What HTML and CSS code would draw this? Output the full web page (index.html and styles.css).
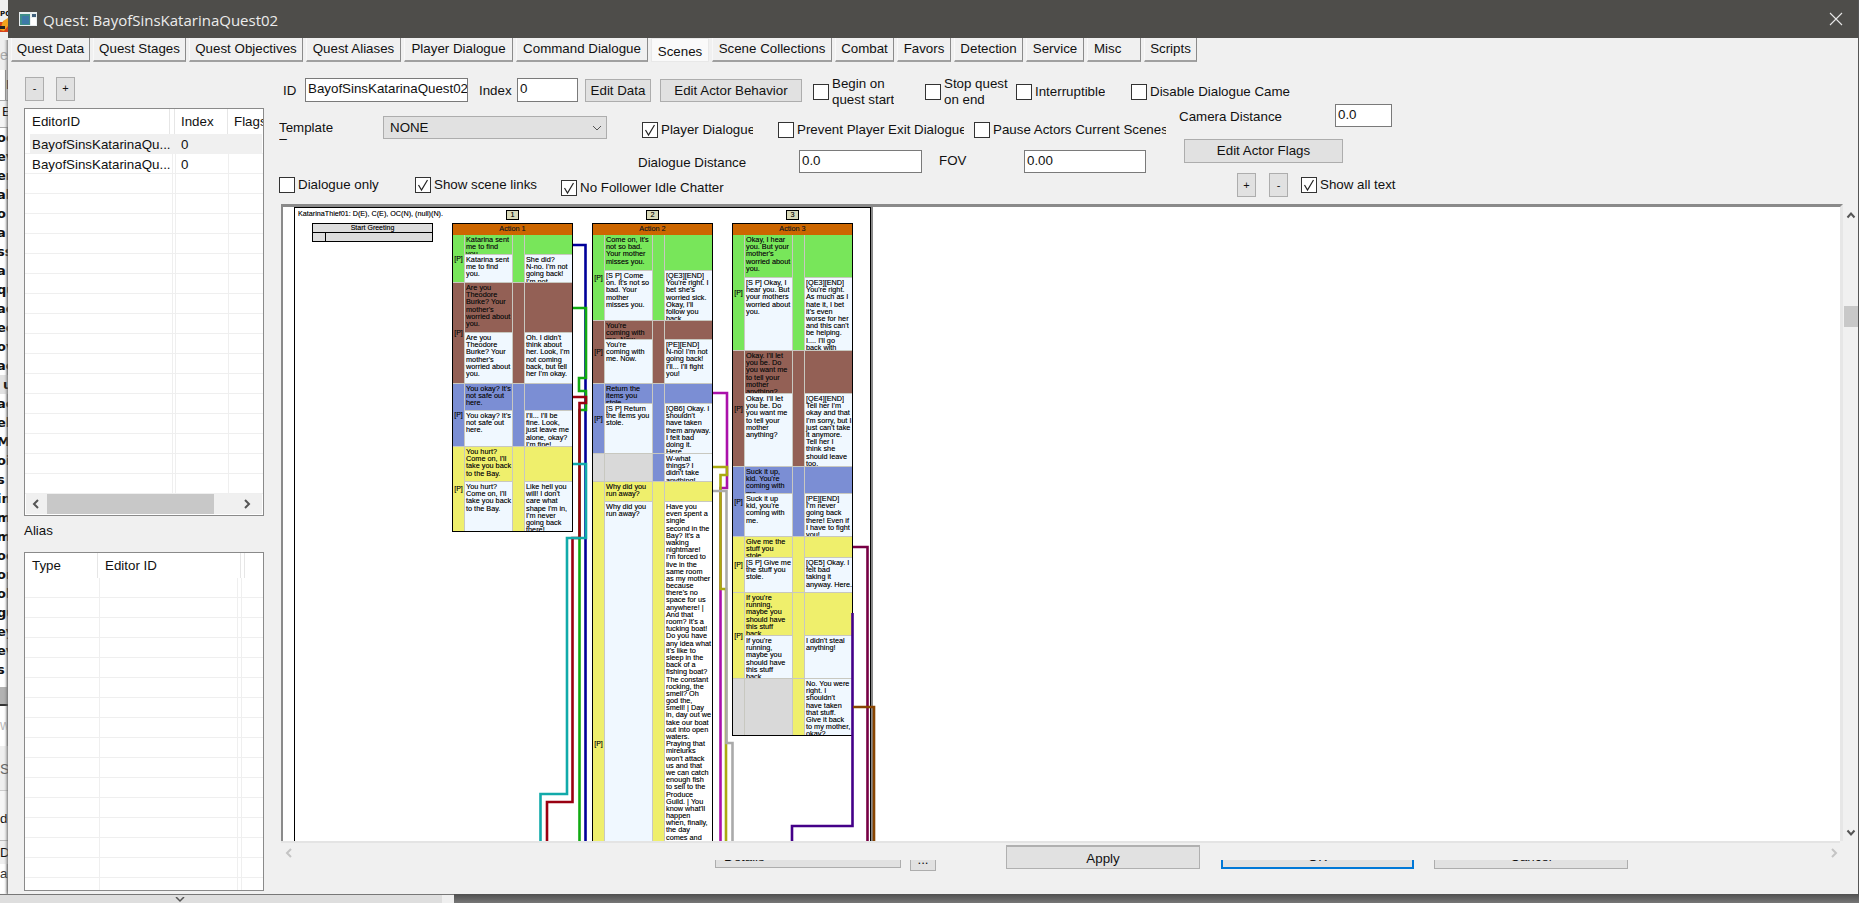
FILE: index.html
```html
<!DOCTYPE html>
<html lang="en">
<head>
<meta charset="utf-8">
<title>Quest: BayofSinsKatarinaQuest02</title>
<link rel="stylesheet" href="styles.css">
</head>
<body>
<div class="app">
  <div class="upper">
    <aside class="behind">
      <div class="b-top"><span class="b-pc">PC</span><svg class="b-icon" width="8" height="14" viewBox="0 0 8 14"><path d="M0 4h8v10H0z" fill="#d8431c"/><path d="M3 3l5-3v8l-4 5-4-1z" fill="#f2a31d"/><path d="M0 8h5v3H0z" fill="#222"/></svg></div>
      <div class="b-e">e</div>
      <div class="b-btn">D</div>
      <div class="b-box">E</div>
      <div class="b-list">
        <div>oc</div><div>ev</div><div>er</div><div>al</div><div>o</div><div>a</div><div>ss</div><div>a</div><div>qu</div><div>ac</div><div>ee</div><div>ov</div><div>ac</div><div class="b-sel">ue</div><div>ac</div><div>el</div><div>M</div><div>oi</div><div>s</div><div>in</div><div>m</div><div>m</div><div>oc</div><div>or</div><div>ol</div><div>gu</div><div>ey</div><div>ev</div><div>s</div>
      </div>
      <div class="b-bar"></div>
      <div class="b-w">w</div>
      <div class="b-sp">Sp</div>
      <div class="b-dc">dc</div>
      <div class="b-d">D</div>
      <div class="b-ar">ar</div>
    </aside>
    <main class="dialog">
      <header class="titlebar">
        <svg class="win-icon" width="18" height="14" viewBox="0 0 18 14"><rect width="18" height="14" fill="#e8eef0"/><rect x="1" y="2" width="10" height="11" fill="#3f8f8a"/><rect x="3" y="4" width="7" height="8" fill="#3e79a8"/><rect x="13" y="2" width="4" height="3" fill="#40607c"/><rect x="12" y="6" width="5" height="7" fill="#fff"/></svg>
        <span class="title">Quest: BayofSinsKatarinaQuest02</span>
        <svg class="close" width="14" height="14" viewBox="0 0 14 14"><path d="M1 1l12 12M13 1L1 13" stroke="#e8e8e8" stroke-width="1.1" fill="none"/></svg>
      </header>
      <nav class="tabs">
        <div class="tab">Quest Data</div>
        <div class="tab">Quest Stages</div>
        <div class="tab">Quest Objectives</div>
        <div class="tab">Quest Aliases</div>
        <div class="tab">Player Dialogue</div>
        <div class="tab">Command Dialogue</div>
        <div class="tab tab-on">Scenes</div>
        <div class="tab">Scene Collections</div>
        <div class="tab">Combat</div>
        <div class="tab">Favors</div>
        <div class="tab">Detection</div>
        <div class="tab">Service</div>
        <div class="tab tab-left">Misc</div>
        <div class="tab">Scripts</div>
      </nav>
      <div class="content">
        <section class="leftpane">
          <div class="pm-row">
            <div class="btn pm">-</div>
            <div class="btn pm">+</div>
          </div>
          <div class="lv lv-scenes">
            <div class="lv-head">
              <div class="hc c-id">EditorID</div>
              <div class="hc c-ix">Index</div>
              <div class="hc c-fl">Flags</div>
            </div>
            <div class="lv-body">
              <div class="lv-row lv-sel"><div class="c-id">BayofSinsKatarinaQu...</div><div class="c-ix">0</div></div>
              <div class="lv-row"><div class="c-id">BayofSinsKatarinaQu...</div><div class="c-ix">0</div></div>
            </div>
            <div class="hscroll">
              <svg width="10" height="12" viewBox="0 0 10 12"><path d="M7 2L3 6l4 4" fill="none" stroke="#555" stroke-width="2"/></svg>
              <div class="hthumb"></div>
              <svg width="10" height="12" viewBox="0 0 10 12"><path d="M3 2l4 4-4 4" fill="none" stroke="#555" stroke-width="2"/></svg>
            </div>
          </div>
          <div class="alias-label">Alias</div>
          <div class="lv lv-alias">
            <div class="lv-head">
              <div class="hc c-type">Type</div>
              <div class="hc c-ed">Editor ID</div>
              <div class="hc c-rest"></div>
            </div>
            <div class="lv-body"></div>
          </div>
        </section>
        <section class="rightpane">
          <div class="row row-a">
            <div class="lbl l-id">ID</div>
            <div class="field f-id">BayofSinsKatarinaQuest02</div>
            <div class="lbl l-index">Index</div>
            <div class="field f-index">0</div>
            <div class="btn b-data">Edit Data</div>
            <div class="btn b-beh">Edit Actor Behavior</div>
            <div class="chk k-begin"><span class="box"></span><span class="chk-text">Begin on<br>quest start</span></div>
            <div class="chk k-stop"><span class="box"></span><span class="chk-text">Stop quest<br>on end</span></div>
            <div class="chk k-int"><span class="box"></span><span class="chk-text">Interruptible</span></div>
            <div class="chk k-dis"><span class="box"></span><span class="chk-text">Disable Dialogue Camera</span></div>
          </div>
          <div class="row row-b">
            <div class="lbl clipline l-tpl">Template<br>Type</div>
            <div class="select"><span>NONE</span><svg width="10" height="6" viewBox="0 0 10 6"><path d="M1 1l4 4 4-4" fill="none" stroke="#555" stroke-width="1"/></svg></div>
            <div class="chk k-pd"><span class="box on"><svg width="14" height="14" viewBox="0 0 14 14"><path d="M2.500 7l3 5 6-10" fill="none" stroke="#222" stroke-width="1.200"/></svg></span><span class="chk-text">Player Dialogue</span></div>
            <div class="chk k-prev"><span class="box"></span><span class="chk-text">Prevent Player Exit Dialogue</span></div>
            <div class="chk k-pause"><span class="box"></span><span class="chk-text">Pause Actors Current Scenes</span></div>
            <div class="lbl clipline l-cam">Camera Distance<br>Override</div>
            <div class="field f-cam">0.0</div>
          </div>
          <div class="row row-c">
            <div class="lbl clipline l-dd">Dialogue Distance<br>Override</div>
            <div class="field f-dd">0.0</div>
            <div class="lbl clipline l-fov">FOV<br>&nbsp;&nbsp;&nbsp;&nbsp;&nbsp;&nbsp;Override</div>
            <div class="field f-fov">0.00</div>
            <div class="btn b-flags">Edit Actor Flags</div>
          </div>
          <div class="row row-d">
            <div class="chk k-only"><span class="box"></span><span class="chk-text">Dialogue only</span></div>
            <div class="chk k-links"><span class="box on"><svg width="14" height="14" viewBox="0 0 14 14"><path d="M2.500 7l3 5 6-10" fill="none" stroke="#222" stroke-width="1.200"/></svg></span><span class="chk-text">Show scene links</span></div>
            <div class="chk k-foll"><span class="box on"><svg width="14" height="14" viewBox="0 0 14 14"><path d="M2.500 7l3 5 6-10" fill="none" stroke="#222" stroke-width="1.200"/></svg></span><span class="chk-text">No Follower Idle Chatter</span></div>
            <div class="btn zoom">+</div>
            <div class="btn zoom z2">-</div>
            <div class="chk k-all"><span class="box on"><svg width="14" height="14" viewBox="0 0 14 14"><path d="M2.500 7l3 5 6-10" fill="none" stroke="#222" stroke-width="1.200"/></svg></span><span class="chk-text">Show all text</span></div>
          </div>
          <div class="viewer">
            <div class="scene">
              <div class="board">
                <div class="scene-cap">KatarinaThief01: D(E), C(E), OC(N), (null)(N).</div>
                <div class="start">
                  <div class="start-h">Start Greeting</div>
                  <div class="start-b"><span></span></div>
                </div>
                <div class="num n1">1</div>
                <div class="num n2">2</div>
                <div class="num n3">3</div>

                <div class="action a1">
                  <div class="act-h">Action 1</div>
                  <div class="sec g r19-27"><div class="p">[P]</div><div class="t">Katarina sent<br>me to find<br>you.</div><div class="m"></div><div class="t"></div><div class="t low">Katarina sent<br>me to find<br>you.</div><div class="t low">She did?<br>N-no. I'm not<br>going back!<br>I'm not</div></div>
                  <div class="sec b r49-50"><div class="p">[P]</div><div class="t">Are you<br>Theodore<br>Burke? Your<br>mother's<br>worried about<br>you.</div><div class="m"></div><div class="t"></div><div class="t low">Are you<br>Theodore<br>Burke? Your<br>mother's<br>worried about<br>you.</div><div class="t low">Oh. I didn't<br>think about<br>her. Look, I'm<br>not coming<br>back, but tell<br>her I'm okay.</div></div>
                  <div class="sec u r26-35"><div class="p">[P]</div><div class="t">You okay? It's<br>not safe out<br>here.</div><div class="m"></div><div class="t"></div><div class="t low">You okay? It's<br>not safe out<br>here.</div><div class="t low">I'll... I'll be<br>fine. Look,<br>just leave me<br>alone, okay?<br>I'm fine!</div></div>
                  <div class="sec y r34-49"><div class="p">[P]</div><div class="t">You hurt?<br>Come on, I'll<br>take you back<br>to the Bay.</div><div class="m"></div><div class="t"></div><div class="t low">You hurt?<br>Come on, I'll<br>take you back<br>to the Bay.</div><div class="t low">Like hell you<br>will! I don't<br>care what<br>shape I'm in,<br>I'm never<br>going back<br>there!</div></div>
                </div>

                <div class="action a2">
                  <div class="act-h">Action 2</div>
                  <div class="sec g r35-49"><div class="p">[P]</div><div class="t">Come on, It's<br>not so bad.<br>Your mother<br>misses you.</div><div class="m"></div><div class="t"></div><div class="t low">[S P] Come<br>on. It's not so<br>bad. Your<br>mother<br>misses you.</div><div class="t low">[QE3][END]<br>You're right. I<br>bet she's<br>worried sick.<br>Okay, I'll<br>follow you<br>back.</div></div>
                  <div class="sec b r18-43"><div class="p">[P]</div><div class="t">You're<br>coming with<br>me. Now</div><div class="m"></div><div class="t"></div><div class="t low">You're<br>coming with<br>me. Now.</div><div class="t low">[PE][END]<br>N-no! I'm not<br>going back!<br>I'll... I'll fight<br>you!</div></div>
                  <div class="sec u r19-49"><div class="p">[P]</div><div class="t">Return the<br>items you<br>stole.</div><div class="m"></div><div class="t"></div><div class="t low">[S P] Return<br>the items you<br>stole.</div><div class="t low">[QB6] Okay. I<br>shouldn't<br>have taken<br>them anyway.<br>I felt bad<br>doing it.<br>Here.</div></div>
                  <div class="sec u r27 none"><div class="p"></div><div class="t"></div><div class="m"></div><div class="t low">W-what<br>things? I<br>didn't take<br>anything!</div></div>
                  <div class="sec y r19-504"><div class="p">[P]</div><div class="t">Why did you<br>run away?</div><div class="m"></div><div class="t"></div><div class="t low">Why did you<br>run away?</div><div class="t white">Have you<br>even spent a<br>single<br>second in the<br>Bay? It's a<br>waking<br>nightmare!<br>I'm forced to<br>live in the<br>same room<br>as my mother<br>because<br>there's no<br>space for us<br>anywhere! |<br>And that<br>room? It's a<br>fucking boat!<br>Do you have<br>any idea what<br>it's like to<br>sleep in the<br>back of a<br>fishing boat?<br>The constant<br>rocking, the<br>smell? Oh<br>god the,<br>smell! | Day<br>in, day out we<br>take our boat<br>out into open<br>waters.<br>Praying that<br>mirelurks<br>won't attack<br>us and that<br>we can catch<br>enough fish<br>to sell to the<br>Produce<br>Guild. | You<br>know what'll<br>happen<br>when, finally,<br>the day<br>comes and</div></div>
                </div>

                <div class="action a3">
                  <div class="act-h">Action 3</div>
                  <div class="sec g r42-72"><div class="p">[P]</div><div class="t">Okay, I hear<br>you. But your<br>mother's<br>worried about<br>you.</div><div class="m"></div><div class="t"></div><div class="t low">[S P] Okay, I<br>hear you. But<br>your mothers<br>worried about<br>you.</div><div class="t low">[QE3][END]<br>You're right.<br>As much as I<br>hate it, I bet<br>it's even<br>worse for her<br>and this can't<br>be helping.<br>I.... I'll go<br>back with</div></div>
                  <div class="sec b r42-72"><div class="p">[P]</div><div class="t">Okay. I'll let<br>you be. Do<br>you want me<br>to tell your<br>mother<br>anything?</div><div class="m"></div><div class="t"></div><div class="t low">Okay. I'll let<br>you be. Do<br>you want me<br>to tell your<br>mother<br>anything?</div><div class="t low">[QE4][END]<br>Tell her I'm<br>okay and that<br>I'm sorry, but I<br>just can't take<br>it anymore.<br>Tell her I<br>think she<br>should leave<br>too.</div></div>
                  <div class="sec u r26-42"><div class="p">[P]</div><div class="t">Suck it up,<br>kid. You're<br>coming with<br>me.</div><div class="m"></div><div class="t"></div><div class="t low">Suck it up<br>kid, you're<br>coming with<br>me.</div><div class="t low">[PE][END]<br>I'm never<br>going back<br>there!  Even if<br>I have to fight<br>you!</div></div>
                  <div class="sec y r20-34"><div class="p">[P]</div><div class="t">Give me the<br>stuff you<br>stole.</div><div class="m"></div><div class="t"></div><div class="t low">[S P] Give me<br>the stuff you<br>stole.</div><div class="t low">[QE5] Okay. I<br>felt bad<br>taking it<br>anyway. Here.</div></div>
                  <div class="sec y r42-42"><div class="p">[P]</div><div class="t">If you're<br>running,<br>maybe you<br>should have<br>this stuff<br>back.</div><div class="m"></div><div class="t"></div><div class="t low">If you're<br>running,<br>maybe you<br>should have<br>this stuff<br>back.</div><div class="t low">I didn't steal<br>anything!</div></div>
                  <div class="sec y r56 none"><div class="p"></div><div class="t"></div><div class="m"></div><div class="t low">No. You were<br>right. I<br>shouldn't<br>have taken<br>that stuff.<br>Give it back<br>to my mother,<br>okay?</div></div>
                </div>
              </div>
              <svg class="wires" width="1000" height="640" viewBox="283 207 1000 640">
                <g fill="none" stroke-width="2.600" stroke-linejoin="miter">
                  <path stroke="#000099" d="M573 245H585.500V841"/>
                  <path stroke="#11aa11" d="M573 308H586V378H579V391H586V410H579.500V841"/>
                  <path stroke="#990011" d="M573 397H586V403H579.500V538H572.500V802H547V841"/>
                  <path stroke="#11aaaa" d="M573 464H586V538H567V794H540.500V841"/>
                  <path stroke="#aa11aa" d="M713 393H727V488H720.500V841"/>
                  <path stroke="#aaaa11" d="M713 467H727V475H720.500V589H726V841"/>
                  <path stroke="#aaaaaa" d="M713 491H726.500V743H732.500V841"/>
                  <path stroke="#770044" d="M853 547H867.500V841"/>
                  <path stroke="#440088" d="M852.500 613V826H792V841"/>
                  <path stroke="#884400" d="M853 707H874V841"/>
                </g>
              </svg>
            </div>
            <div class="vscroll">
              <svg class="sb-up" width="10" height="8" viewBox="0 0 10 8"><path d="M1.500 6.500L5 2.500l3.500 4" fill="none" stroke="#555" stroke-width="2"/></svg>
              <div class="vthumb"></div>
              <svg class="sb-down" width="10" height="8" viewBox="0 0 10 8"><path d="M1.500 1.500L5 5.500l3.500-4" fill="none" stroke="#555" stroke-width="2"/></svg>
            </div>
          </div>
          <div class="footer">
            <svg class="arrow-l" width="10" height="12" viewBox="0 0 10 12"><path d="M7 2L3 6l4 4" fill="none" stroke="#c4c4c4" stroke-width="2"/></svg>
            <div class="clipbtn cb-detail"><span>Details</span></div>
            <div class="clipbtn cb-more"><span>...</span></div>
            <div class="btn b-apply">Apply</div>
            <div class="clipbtn cb-ok"><span>OK</span></div>
            <div class="clipbtn cb-cancel"><span>Cancel</span></div>
            <svg class="arrow-r" width="10" height="12" viewBox="0 0 10 12"><path d="M3 2l4 4-4 4" fill="none" stroke="#c4c4c4" stroke-width="2"/></svg>
          </div>
        </section>
      </div>
    </main>
  </div>
  <div class="lower">
    <div class="lower-table"><svg class="lower-chev" width="10" height="6" viewBox="0 0 10 6"><path d="M1 0l4 4 4-4" fill="none" stroke="#555" stroke-width="1.500"/></svg></div>
    <div class="lower-gap"></div>
    <div class="lower-dark"></div>
  </div>
</div>
</body>
</html>
```

FILE: styles.css
```css
* { box-sizing: border-box; }
html, body { margin: 0; padding: 0; }
body {
  width: 1859px; height: 903px; overflow: hidden;
  font: 13.33px/16px "Liberation Sans", Arial, sans-serif;
  color: #111; background: #f0f0f0;
}
.app { display: flex; flex-direction: column; width: 1859px; height: 903px; }
.upper { display: flex; height: 894px; }

/* window behind */
.behind { width: 8px; flex: none; overflow: hidden; background: #fff; white-space: nowrap; box-shadow: inset -2px 0 2px -1px #999; }
.b-top { position: relative; height: 40px; background: #efefef; }
.b-pc { font: bold 7px/8px "DejaVu Sans", sans-serif; display: block; padding-top: 10px; }
.b-icon { display: block; }
.b-e { height: 30px; padding-top: 4px; color: #aaa; background: #efefef; font-size: 14px; line-height: 22px; }
.b-btn { height: 30px; margin-left: 5px; margin-top: 0; border-left: 1px solid #999; background: #e6e6e6; line-height: 30px; }
.b-box { height: 28px; margin-left: 0; border-top: 1px solid #aaa; border-bottom: 1px solid #aaa; padding-left: 2px; line-height: 22px; background: #f4f4f4; }
.b-list { font: bold 13px/19px "DejaVu Sans", sans-serif; color: #111; }
.b-list div { height: 19px; margin-left: -3px; }
.b-list .b-sel { background: #e2e2e2; padding-left: 3px; margin-left: 0; }
.b-bar { height: 19px; margin-top: 8px; background: #b2b2b2; border-bottom: 2px solid #333; }
.b-w { height: 40px; color: #bbb; font-size: 14px; line-height: 38px; }
.b-sp { height: 44px; color: #666; background: #efefef; line-height: 46px; font-size: 14px; }
.b-dc { height: 50px; padding-top: 16px; line-height: 24px; background: #f6f6f6; border-top: 1px solid #ccc; }
.b-d { height: 24px; line-height: 24px; border-top: 1px solid #bbb; background: #efefef; }
.b-ar { height: 20px; line-height: 20px; color: #333; }

/* dialog */
.dialog { flex: 1; min-width: 0; display: flex; flex-direction: column; background: #f0f0f0; border-right: 1px solid #555; box-shadow: -1px 0 3px #666; }
.titlebar { height: 38px; flex: none; display: flex; align-items: center; background: #4e4d4a; color: #ececec; padding-left: 11px; padding-right: 15px; }
.win-icon { flex: none; margin-right: 6px; margin-top: -1px; }
.title { font: 15px/20px "Open Sans", sans-serif; margin-top: 1px; }
.close { margin-left: auto; margin-top: -1px; }

.tabs {
  height: 24px; flex: none; padding-left: 3px;
  display: grid;
  grid-template-columns: 82px 96px 117px 98px 112px 135px 61px 123px 62px 57px 72px 61px 57px 56px;
}
.tab {
  margin-right: 3px; height: 24px; line-height: 21px; text-align: center;
  background: #f0f0f0; border-left: 1px solid #f8f8f8;
  border-right: 1px solid #8a8a8a; border-bottom: 2px solid #a0a0a0; white-space: nowrap;
}
.tab-on { background: #fafafa; border: 1px solid #e8e8e8; line-height: 25px; }
.tab-left { text-align: left; padding-left: 6px; }

.content { flex: 1; min-height: 0; display: flex; }
.leftpane { width: 262px; flex: none; padding: 15px 0 0 16px; }
.pm-row { display: flex; gap: 12px; padding-left: 1px; height: 31px; }
.btn { background: #e1e1e1; border: 1px solid #adadad; text-align: center; white-space: nowrap; }
.pm { width: 19px; height: 24px; line-height: 21px; font-size: 11px; }

.lv { width: 240px; border: 1px solid #8a8a8a; background: #fff; display: flex; flex-direction: column; overflow: hidden; }
.lv-scenes { height: 408px; }
.lv-alias { height: 339px; }
.lv-head { height: 25px; flex: none; display: flex; line-height: 26px; background: #fff; }
.hc { overflow: hidden; white-space: nowrap; border-right: 1px solid #e6e6e6; padding-left: 7px; }
.lv-scenes .c-id { width: 150px; }
.lv-scenes .c-ix { width: 53px; padding-left: 6px; }
.lv-scenes .c-fl { flex: 1; padding-left: 6px; border-right: 0; }
.lv-scenes .hc.c-id { box-shadow: inset -4px 0 0 #fff, inset -5px 0 0 #e6e6e6; }
.c-type { width: 73px; }
.c-ed { width: 143px; }
.c-rest { flex: 1; border-right: 0; border-left: 1px solid #e6e6e6; margin-left: 3px; }
.lv-body {
  flex: 1; min-height: 0;
  background-image: repeating-linear-gradient(to bottom, transparent 0 19px, #efefef 19px 20px);
  position: relative;
}
.lv-scenes .lv-body {
  background-image:
    linear-gradient(#efefef, #efefef), linear-gradient(#efefef, #efefef), linear-gradient(#efefef, #efefef),
    repeating-linear-gradient(to bottom, transparent 0 19px, #efefef 19px 20px);
  background-size: 1px 100%, 1px 100%, 1px 100%, auto;
  background-position: 147px 0, 150px 0, 203px 0, 0 0;
  background-repeat: no-repeat;
}
.lv-alias .lv-body {
  background-image:
    linear-gradient(#efefef, #efefef), linear-gradient(#efefef, #efefef), linear-gradient(#efefef, #efefef),
    repeating-linear-gradient(to bottom, transparent 0 19px, #efefef 19px 20px);
  background-size: 1px 100%, 1px 100%, 1px 100%, auto;
  background-position: 74px 0, 212px 0, 216px 0, 0 0;
  background-repeat: no-repeat;
}
.lv-row { height: 20px; display: flex; line-height: 21px; }
.lv-row .c-id { padding-left: 7px; white-space: nowrap; overflow: hidden; }
.lv-row .c-ix { padding-left: 6px; }
.lv-sel { background: #f0f0f0; margin-left: 5px; margin-right: 1px; }
.lv-sel .c-id { padding-left: 2px; width: 145px; }
.hscroll { height: 20px; flex: none; margin-bottom: 1px; display: flex; align-items: center; background: #f0f0f0; padding: 0 5px 0 5px; margin-left: 1px; margin-right: 1px; }
.hthumb { width: 167px; height: 20px; margin-left: 6px; margin-right: 28px; background: #c8c8c8; }
.alias-label { height: 36px; line-height: 30px; }

.rightpane { flex: 1; min-width: 0; padding-top: 15px; display: flex; flex-direction: column; }
.row { display: flex; align-items: flex-start; white-space: nowrap; }
.row-a { height: 27px; }
.row-b { height: 35px; }
.row-c { height: 34px; }
.row-d { height: 31px; }
.lbl { flex: none; }
.clipline { overflow: hidden; }
.field { flex: none; height: 24px; background: #fff; border: 1px solid #7a7a7a; padding-left: 2px; line-height: 20px; overflow: hidden; }

.chk { flex: none; display: flex; align-items: center; gap: 3px; overflow: hidden; }
.box { flex: none; width: 16px; height: 16px; background: #fff; border: 1px solid #333; display: flex; align-items: center; justify-content: center; }
.chk-text { white-space: nowrap; overflow: hidden; }

.l-id { margin-left: 13px; width: 22px; margin-top: 6px; }
.f-id { width: 163px; margin-top: 1px; }
.l-index { margin-left: 11px; width: 38px; margin-top: 6px; }
.f-index { width: 61px; margin-top: 1px; }
.b-data { margin-left: 7px; width: 66px; height: 23px; margin-top: 2px; line-height: 21px; }
.b-beh { margin-left: 9px; width: 142px; height: 23px; margin-top: 2px; line-height: 21px; }
.k-begin { margin-left: 11px; width: 112px; height: 32px; margin-top: -1px; }
.k-stop { width: 91px; height: 32px; margin-top: -1px; }
.k-int { width: 115px; height: 16px; margin-top: 7px; }
.k-dis { width: 159px; height: 16px; margin-top: 7px; }

.l-tpl { margin-left: 9px; width: 104px; height: 20px; margin-top: 16px; }
.select { flex: none; width: 224px; height: 23px; margin-top: 12px; background: #e1e1e1; border: 1px solid #adadad; padding: 0 4px 0 6px; display: flex; align-items: center; justify-content: space-between; }
.k-pd { margin-left: 35px; width: 111px; height: 16px; margin-top: 18px; }
.k-prev { margin-left: 25px; width: 186px; height: 16px; margin-top: 18px; }
.k-pause { margin-left: 10px; width: 192px; height: 16px; margin-top: 18px; }
.l-cam { margin-left: 13px; width: 156px; height: 19px; margin-top: 5px; }
.f-cam { width: 57px; height: 23px; }

.l-dd { margin-left: 368px; width: 161px; height: 19px; margin-top: 16px; }
.f-dd { width: 123px; margin-top: 11px; height: 23px; }
.l-fov { margin-left: 17px; width: 85px; height: 19px; margin-top: 14px; }
.f-fov { width: 122px; margin-top: 11px; height: 23px; }
.b-flags { margin-left: 38px; width: 159px; height: 24px; line-height: 22px; }

.k-only { margin-left: 9px; width: 136px; height: 16px; margin-top: 4px; }
.k-links { width: 146px; height: 16px; margin-top: 4px; }
.k-foll { width: 676px; height: 16px; margin-top: 7px; }
.zoom { width: 19px; height: 24px; line-height: 22px; font-size: 11px; }
.z2 { margin-left: 13px; }
.k-all { margin-left: 13px; height: 16px; margin-top: 4px; }

/* viewer */
.viewer { height: 637px; flex: none; margin-left: 11px; display: flex; }
.scene { position: relative; flex: 1; min-width: 0; overflow: hidden; background: #fff; border-top: 3px solid #8a8a8a; border-left: 2px solid #8a8a8a; border-right: 3px solid #e6e6e6; }
.board { position: absolute; left: 11px; top: 0; width: 577px; height: 700px; border: 1px solid #000; border-width: 1px 1.500px; background: #fff; box-shadow: 2px 0 0 #8a8a8a; font-size: 7.300px; line-height: 7.180px; color: #111; text-shadow: 0 0 .6px rgba(0, 0, 0, .55); }
.scene-cap { position: absolute; left: 3px; top: 2px; white-space: nowrap; font-size: 7.200px; line-height: 8px; }
.start { position: absolute; left: 17px; top: 15px; width: 121px; height: 19px; border: 1px solid #000; background: #ddd; }
.start-h { height: 9px; border-bottom: 1px solid #000; text-align: center; line-height: 8px; font-size: 7px; }
.start-b { height: 8px; }
.start-b span { display: block; width: 13px; height: 8px; border-right: 1px solid #000; }
.num { position: absolute; top: 2px; width: 13px; height: 10px; background: #d8d8b8; border: 1px solid #000; text-align: center; line-height: 8px; }
.n1 { left: 211px; }
.n2 { left: 351px; }
.n3 { left: 491px; }
.action { position: absolute; top: 15px; width: 121px; border: 1px solid #000; background: #c8c8c0; }
.a1 { left: 157px; }
.a2 { left: 297px; }
.a3 { left: 437px; }
.act-h { height: 11px; background: #cc6600; text-align: center; line-height: 10px; color: #222; }
.sec { display: grid; grid-template-columns: 11px 47px 11px 47px; gap: 1px; margin-bottom: 1px; --c: #ddd; }
.sec:last-child { margin-bottom: 0; }
.g { --c: #78e65a; }
.b { --c: #936055; }
.u { --c: #7b8ed4; }
.y { --c: #efef6c; }
.p { grid-column: 1; grid-row: span 2; background: var(--c); display: flex; align-items: center; justify-content: center; white-space: nowrap; font-size: 7px; }
.m { grid-column: 3; grid-row: span 2; background: var(--c); }
.t { background: var(--c); overflow: hidden; padding: 1px 0 0 1px; white-space: nowrap; }
.t.low { background: #f0f8ff; }
.t.white { background: #fff; }
.none .p, .none .t:not(.low) { background: #d9d9d9; }
.none .p, .none .m { grid-row: span 1; }
.r19-27 { grid-template-rows: 19px 27px; }
.r49-50 { grid-template-rows: 49px 50px; }
.r26-35 { grid-template-rows: 26px 35px; }
.r34-49 { grid-template-rows: 34px 49px; }
.r35-49 { grid-template-rows: 35px 49px; }
.r18-43 { grid-template-rows: 18px 43px; }
.r19-49 { grid-template-rows: 19px 49px; }
.r27 { grid-template-rows: 27px; }
.r19-504 { grid-template-rows: 19px 504px; }
.r42-72 { grid-template-rows: 42px 72px; }
.r26-42 { grid-template-rows: 26px 42px; }
.r20-34 { grid-template-rows: 20px 34px; }
.r42-42 { grid-template-rows: 42px 42px; }
.r56 { grid-template-rows: 56px; }
.wires { position: absolute; left: 0; top: 0; pointer-events: none; }

.vscroll { width: 15px; flex: none; background: #f0f0f0; display: flex; flex-direction: column; align-items: center; }
.sb-up { margin-top: 7px; flex: none; }
.vthumb { width: 14px; height: 21px; margin-top: 87px; background: #c8c8c8; flex: none; }
.sb-down { margin-top: auto; margin-bottom: 4px; flex: none; }

.footer { height: 53px; flex: none; display: flex; align-items: flex-start; border-top: 2px solid #e4e4e4; margin-left: 11px; margin-right: 18px; }
.arrow-l { margin-left: 3px; margin-top: 4px; flex: none; }
.arrow-r { margin-left: 201px; margin-top: 4px; flex: none; }
.clipbtn { flex: none; height: 9px; margin-top: 17px; overflow: hidden; background: #e1e1e1; border: 1px solid #adadad; border-top: 0; text-align: center; }
.clipbtn span { display: block; line-height: 16px; margin-top: -11px; }
.cb-detail { margin-left: 421px; width: 186px; height: 8px; text-align: left; padding-left: 8px; }
.cb-more { margin-left: 9px; width: 26px; height: 11px; }
.cb-more span { margin-top: -8px; }
.b-apply { margin-left: 70px; width: 194px; height: 24px; margin-top: 2px; line-height: 24px; border-color: #b0b0b0; border-top-width: 2px; }
.cb-ok { margin-left: 21px; width: 193px; border: 2px solid #0078d7; border-top: 0; border-bottom-width: 2px; }
.cb-cancel { margin-left: 20px; width: 194px; }

/* strip below */
.lower { height: 9px; flex: none; display: flex; }
.lower-table { width: 442px; background: #dedede; border-top: 1px solid #777; padding-left: 175px; }
.lower-chev { display: block; margin-top: 2px; }
.lower-gap { width: 12px; background: #efefef; border-top: 1px solid #777; }
.lower-dark { flex: 1; background: linear-gradient(#4f4f4f, #777); }
```
